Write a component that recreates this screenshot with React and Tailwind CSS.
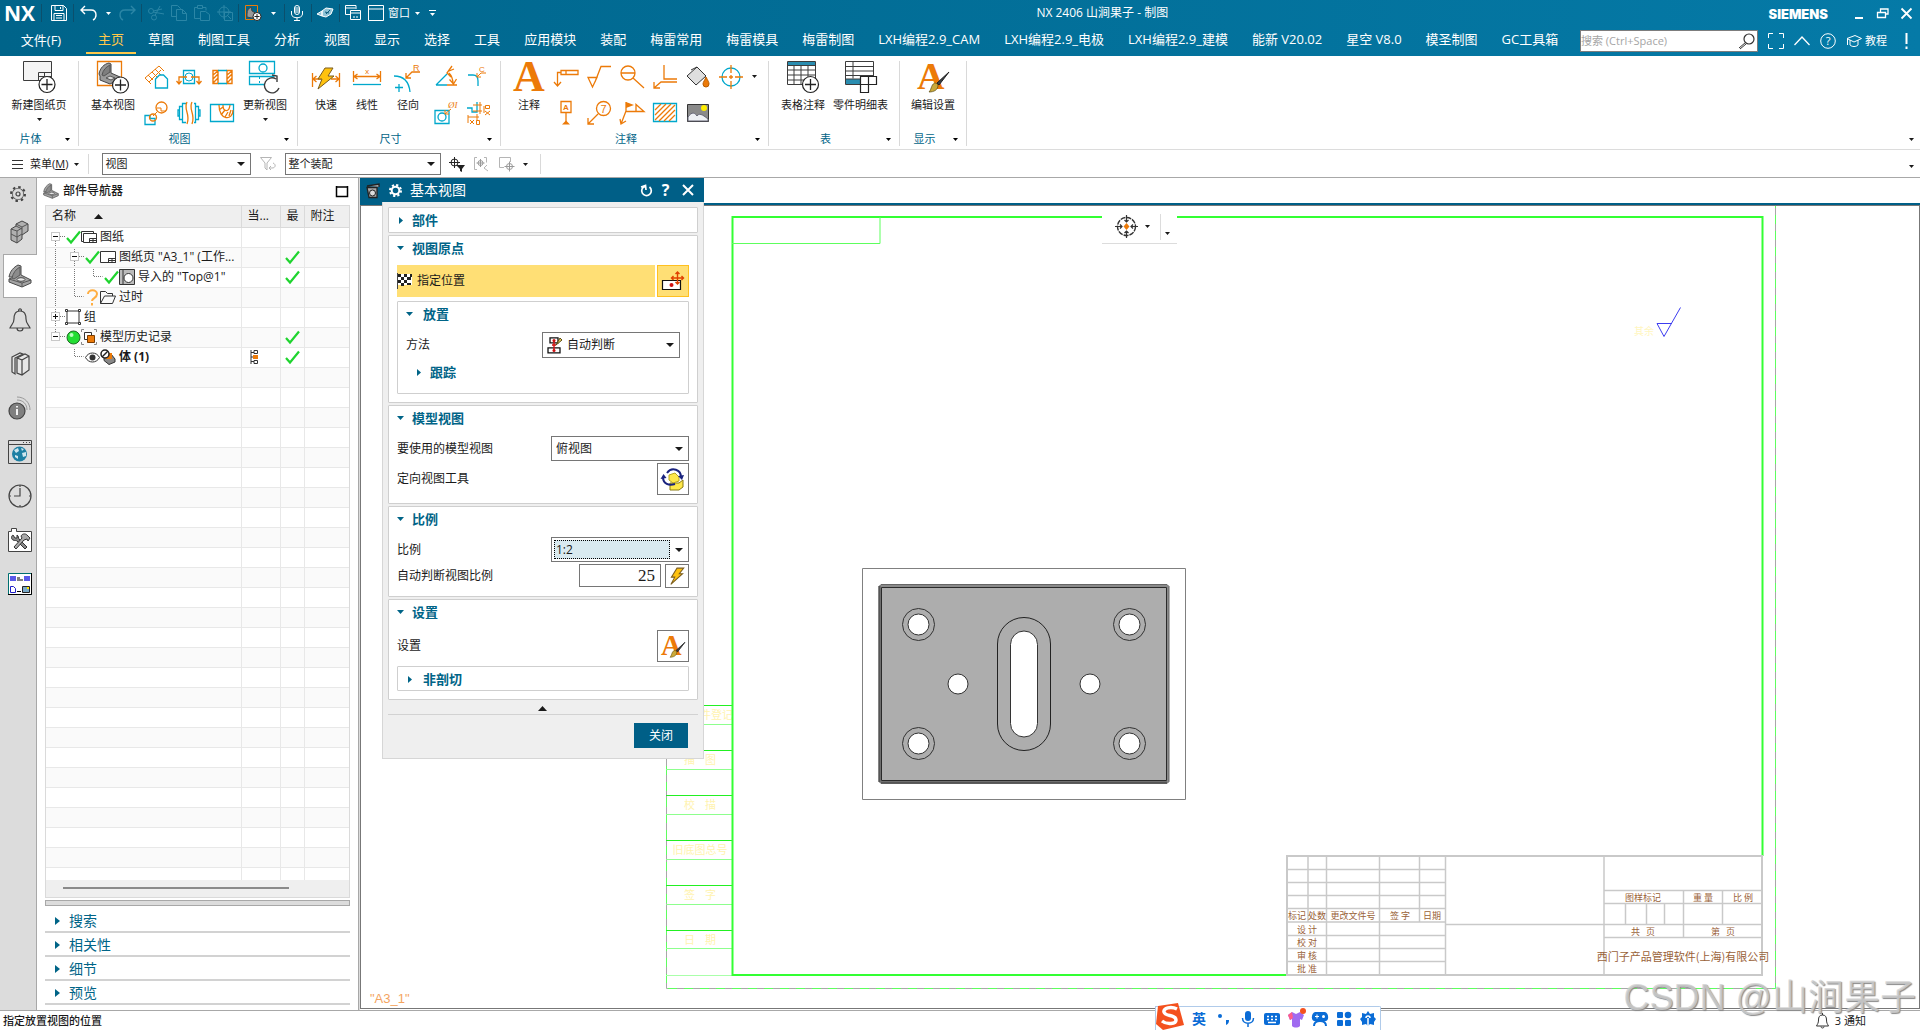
import { useState } from "react";

const ORANGE = "#ec7a08";
const CYAN = "#00a8cc";
const DARK = "#3c3c3c";

/* ---------- small helpers ---------- */

function Svg({ w = 24, h = w, box, className = "", children, ...rest }) {
  return (
    <svg
      width={w}
      height={h}
      viewBox={box || `0 0 ${w} ${h}`}
      fill="none"
      className={`shrink-0 overflow-visible ${className}`}
      aria-hidden="true"
      {...rest}
    >
      {children}
    </svg>
  );
}

const Caret = ({ className = "" }) => (
  <Svg w={5} h={3} className={className}>
    <path d="M0 0h5L2.500 3z" fill="currentColor" />
  </Svg>
);

const BigCaret = ({ className = "" }) => (
  <Svg w={8} h={4} className={className}>
    <path d="M0 0h8L4 4z" fill="#1a1a1a" />
  </Svg>
);

const Sep = () => <span className="h-[18px] w-px bg-[#0b4f6c]" />;

const Check = () => (
  <Svg w={15} h={14}>
    <path d="M1 8l4 4.500L14 1.500" stroke="#1fd42f" strokeWidth="2.200" />
  </Svg>
);

const Bracket = ({ w = 24 }) => (
  <Svg w={w} box="0 0 24 24">
    <path d="M1 13C2 7 6 3 10 1l3 1v9l10 5v3l-9 4-13-5v-3l5-2z" fill="#a4a4a4" stroke="#4a4a4a" />
    <path d="M4 14C5 9 8 5 12 3v8l-6 4z" fill="#8c8c8c" stroke="#5a5a5a" />
    <path d="M1 15l13 4 9-3M14 19v4" stroke="#5a5a5a" />
    <ellipse cx="13" cy="15.500" rx="4" ry="1.800" fill="#e8e8e8" stroke="#4a4a4a" />
  </Svg>
);

const Bolt = ({ w = 16 }) => (
  <Svg w={w} box="0 0 16 16">
    <path d="M8 1h6l-4 5h3L2.500 15.500 6 9H3z" fill="#ffc20e" stroke="#7a5c1e" strokeWidth="0.900" />
  </Svg>
);

const BrushA = ({ w = 32 }) => (
  <Svg w={w} box="0 0 32 32">
    <text x="0" y="28" fontSize="38" fontWeight="bold" fontFamily="Liberation Serif, serif" fill={ORANGE}>A</text>
    <path d="M32 11L20 22l2 2z" fill="#3a4044" stroke="#222" />
    <path d="M19 22c-5 0-4 6-7 9 5 0 9-2 9-7z" fill="#c9a93a" stroke="#5a4a14" strokeWidth="0.700" />
  </Svg>
);

/* ---------- title bar ---------- */

function TitleBar() {
  const dim = "#2b86a6";
  return (
    <div className="flex h-[26px] items-center text-white">
      <span className="ml-1 w-[37px] font-[Open_Sans,sans-serif] text-[21px] leading-[26px] font-bold">NX</span>
      <Sep />
      <button aria-label="保存" className="ml-[9px] mr-[6px]">
        <Svg w={16}>
          <path d="M.5.5h12l3 3v12H.5zM4 .5v5h8v-5M3 15.500v-7h10v7M5 10.500h6M5 13h6M9.500 2v2" stroke="#fff" />
        </Svg>
      </button>
      <Sep />
      <button aria-label="撤消" className="ml-[6px] mr-[9px]">
        <Svg w={17} h={16}>
          <path d="M5 1L1 5l4 4M1 5h10c3 0 5 2 5 5 0 2-1 4-3 5" stroke="#fff" strokeWidth="1.400" />
        </Svg>
      </button>
      <Caret />
      <button aria-label="重做" className="ml-2 mr-[5px]">
        <Svg w={17} h={16}>
          <path d="M12 1l4 4-4 4M16 5H6c-3 0-5 2-5 5 0 2 1 4 3 5" stroke={dim} strokeWidth="1.400" />
        </Svg>
      </button>
      <Sep />
      <div className="ml-[6px] mr-[5px] flex gap-[7px]">
        <Svg w={16}>
          <circle cx="3" cy="6" r="2.500" stroke={dim} />
          <circle cx="6" cy="12.500" r="2.500" stroke={dim} />
          <path d="M5 7l11 2M7 10.500L12 1M5.500 6L14 4" stroke={dim} />
        </Svg>
        <Svg w={16}>
          <path d="M5.500 11.500h-5V.5h6l3 3v1M5.500 4.500h6l4 4v7h-10zM11.500 4.500v4h4" stroke={dim} />
        </Svg>
        <Svg w={16}>
          <path d="M6 13.500H.5v-11h3M9 2.500h3v3M3.500 .5h5v3h-5zM6.500 6.500h5l4 3v6h-9z" stroke={dim} />
        </Svg>
        <Svg w={16}>
          <circle cx="7" cy="7" r="5" stroke={dim} />
          <path d="M7 0v14M0 7h14M7.500 7.500h8v8h-8zM10 10l4 4" stroke={dim} />
        </Svg>
      </div>
      <Sep />
      <button aria-label="基本视图" className="ml-[6px] mr-[9px] w-[17px]">
        <Svg w={17} h={16}>
          <path d="M.5.5h12v14H.5z" stroke={ORANGE} />
          <path d="M2 9c0-4 2-6 4-7l1 4 5 3-1 3-4 1-5-1z" fill="#999" stroke="#444" />
          <circle cx="12" cy="11.500" r="4" fill="#fff" stroke="#222" />
          <path d="M12 9v5M9.500 11.500h5" stroke="#222" />
        </Svg>
      </button>
      <Caret className="mr-[8px]" />
      <Sep />
      <Svg w={12} h={16} className="ml-[6px] mr-[8px]">
        <rect x="3.500" y=".5" width="5" height="9" rx="2.500" stroke="#fff" />
        <path d="M.5 6v3c0 5 11 5 11 0V6M6 12.500V16M3 15.500h6M4 3h4M4 5h4M4 7h4" stroke="#fff" />
      </Svg>
      <Sep />
      <Svg w={17} h={16} className="ml-[5px] mr-[5px]">
        <path d="M0 9l5-3v5zM5 6l4-3 7 1-2 5-5 3-4-1z" fill="#8fc3d6" stroke="#fff" />
        <path d="M8 7l4 1M9 9l4-4" stroke="#0b5c7e" />
      </Svg>
      <Sep />
      <Svg w={17} h={16} className="ml-[5px]">
        <path d="M11 4V.5H.5v9H5M.5 3h10M5.500 5.500h10v9h-10zM5.500 8h10" stroke="#fff" />
        <path d="M8 12h5" stroke="#fff" strokeDasharray="2 1" />
      </Svg>
      <Svg w={16} className="ml-[6px]">
        <path d="M.5.5h15v15H.5zM.5 4h15" stroke="#fff" />
      </Svg>
      <span className="ml-1 text-[11px]">窗口</span>
      <Caret className="ml-[5px]" />
      <Svg w={7} h={6} className="ml-[9px]">
        <path d="M0 .5h7" stroke="#fff" />
        <path d="M1 3h5L3.500 6z" fill="#fff" />
      </Svg>
      <h1 className="flex-1 text-center text-[12px]">NX 2406 山涧果子 - 制图</h1>
      <span className="mt-1 font-[Inter,sans-serif] text-[13px] font-black">SIEMENS</span>
      <button aria-label="最小化" className="ml-[27px]">
        <Svg w={8} h={12}><path d="M0 11h8" stroke="#fff" strokeWidth="2" /></Svg>
      </button>
      <button aria-label="还原" className="ml-[14px]">
        <Svg w={12} h={11}><path d="M3.500 4V1H11v5H9M.5 4.500h8v5h-8z" stroke="#fff" strokeWidth="1.300" /></Svg>
      </button>
      <button aria-label="关闭窗口" className="ml-3 mr-2">
        <Svg w={11}><path d="M.5.5l10 10M10.500.5l-10 10" stroke="#fff" strokeWidth="1.800" /></Svg>
      </button>
    </div>
  );
}

const TABS = [
  "主页", "草图", "制图工具", "分析", "视图", "显示", "选择", "工具", "应用模块", "装配",
  "梅雷常用", "梅雷模具", "梅雷制图", "LXH编程2.9_CAM", "LXH编程2.9_电极", "LXH编程2.9_建模",
  "能新 V20.02", "星空 V8.0", "模圣制图", "GC工具箱",
];

function TabBar() {
  const [active, setActive] = useState("主页");
  return (
    <div className="flex h-[30px] items-center text-white">
      <button className="w-[86px] shrink-0 pr-1 text-center text-[13px]">文件(F)</button>
      <nav className="flex self-stretch">
        {TABS.map((tab) => (
          <button
            key={tab}
            onClick={() => setActive(tab)}
            className={`h-[28px] border-b-2 px-3 pt-px text-[13px] leading-[25px] whitespace-nowrap ${
              active === tab ? "border-[#ffc84a] text-[#ffc84a]" : "border-transparent"
            }`}
          >
            {tab}
          </button>
        ))}
      </nav>
      <label className="ml-auto flex h-[22px] w-[178px] shrink-0 items-center border border-[#7d7d7d] bg-white">
        <input
          aria-label="搜索"
          placeholder="搜索 (Ctrl+Space)"
          className="min-w-0 flex-1 text-[11px] text-black outline-none placeholder:text-[#a5a5a5]"
        />
        <Svg w={17} className="mr-[2px]">
          <circle cx="11" cy="6" r="5" stroke="#333" strokeWidth="1.200" />
          <path d="M7.500 9.500L1 15M8 11l-6 5" stroke="#333" />
        </Svg>
      </label>
      <div className="ml-[10px] mr-3 flex shrink-0 items-center">
        <Svg w={16}><path d="M5 .5H.5V5M11 .5h4.500V5M5 15.500H.5V11M11 15.500h4.500V11" stroke="#fff" /></Svg>
        <Svg w={16} h={10} className="ml-[10px]"><path d="M.5 9L8 1l7.500 8" stroke="#fff" strokeWidth="1.300" /></Svg>
        <Svg w={16} className="ml-[10px]">
          <circle cx="8" cy="8" r="7.300" stroke="#fff" />
          <text x="8" y="12" fontSize="11" textAnchor="middle" fill="#fff" fontFamily="Open Sans, sans-serif">?</text>
        </Svg>
        <Svg w={16} h={12} className="ml-[10px]">
          <path d="M1 3.500L9 .5l6.500 3L8 7zM4 5v5c2 2 6 2 8 0V5M1.500 4v6" stroke="#fff" />
        </Svg>
        <span className="ml-[3px] text-[11px]">教程</span>
        <Svg w={3} h={16} className="ml-[18px]"><path d="M1.500 0v11M1.500 13.500V16" stroke="#fff" strokeWidth="2" /></Svg>
      </div>
    </div>
  );
}

/* ---------- ribbon ---------- */

const S = (children) => <Svg w={24}>{children}</Svg>;

const viewIcons = [
  S(<g>
    <path d="M1 13L15 1l5 5M1 13l6 6M5 17l12-12M8 7l6 6M11 4l6 6M4 10l5 5" stroke={ORANGE} />
    <path d="M11.500 14l4-4h4l4 4v9h-12z" stroke={CYAN} fill="#fff" strokeWidth="1.300" />
  </g>),
  S(<g>
    <path d="M6.500 5.500h11v13h-11z" stroke={CYAN} strokeWidth="1.300" />
    <circle cx="12" cy="12" r="4" stroke={CYAN} />
    <path d="M10 12H2v7M-.5 16l2.500 3 2.500-3M14 12h8v7M19.500 16l2.500 3 2.500-3" stroke={ORANGE} strokeWidth="1.300" />
  </g>),
  S(<g>
    <path d="M3 5.500h5v13H3zM17 5.500h5v13h-5zM3 10l5-4M3 14l5-5M3 18l5-5M17 10l5-4M17 14l5-5M17 18l5-5" stroke={ORANGE} strokeWidth="1.400" />
    <path d="M8 5.500h9M8 18.500h9" stroke={CYAN} strokeWidth="1.400" />
  </g>),
  S(<g>
    <circle cx="17.500" cy="6.500" r="5.500" stroke={ORANGE} strokeWidth="1.300" />
    <path d="M13 7h4v3h5M9 15l4-4" stroke={ORANGE} />
    <path d="M1 14.500h5v3h5v6H1z" stroke={CYAN} strokeWidth="1.300" />
    <circle cx="9" cy="16.500" r="3.500" stroke={ORANGE} strokeWidth="1.300" />
  </g>),
  S(<g>
    <path d="M9 2.500H5.500v19H9M5 5.500H2.500v13H5M2 9H1v6h1M17 2.500h1.500v19H17M19 5.500h2.500v13H19M22 9h1v6h-1" stroke={CYAN} strokeWidth="1.300" />
    <path d="M10 1c-4 8 4 12 0 22M15 1c-4 8 4 12 0 22" stroke={ORANGE} strokeWidth="1.300" />
  </g>),
  S(<g>
    <path d="M.5 3.500h23v17H.5z" stroke={CYAN} strokeWidth="1.300" />
    <path d="M9 4c0 16 14 16 14 5M13 4c0 7 6 8 7 0M9 9l4-3M11 14l4-5M15 16l3-5M19 15l2-6" stroke={ORANGE} strokeWidth="1.300" />
  </g>),
];

const dimIcons = [
  S(<g>
    <path d="M2 20L13 9M2 20h11" stroke={CYAN} strokeWidth="1.300" />
    <path d="M18 1L13 8l4 4M15 8c3 3 4 8 4 11M15.500 14.500l4 4.500 3-5M13 20h10M15 6l5-2" stroke={ORANGE} strokeWidth="1.300" />
  </g>),
  S(<g>
    <path d="M1 10h5c4 0 5 3 5 6v5" stroke={CYAN} strokeWidth="1.300" />
    <path d="M10 12l4-4h5M10 8v4h4" stroke={ORANGE} />
    <text x="12" y="7" fontSize="8" fill={ORANGE} fontFamily="Liberation Sans, sans-serif">C</text>
  </g>),
  S(<g>
    <path d="M1 9.500h14v13H1z" stroke={CYAN} strokeWidth="1.300" />
    <circle cx="8" cy="16" r="4" stroke={CYAN} strokeWidth="1.300" />
    <path d="M11 13l6-5M11 9v4h4" stroke={ORANGE} />
    <text x="14" y="7" fontSize="9" fontStyle="italic" fill={ORANGE} fontFamily="Liberation Serif, serif">ØI</text>
  </g>),
  S(<g>
    <path d="M0 7h5v4h5V1" stroke={CYAN} strokeWidth="1.300" />
    <path d="M6 10h9M6 4h9M13 1v12M17 5v7M1 14v8M1 16h11M10 13v7" stroke={ORANGE} />
    <path d="M18.500 4.500h4v3h-4zM9.500 19.500h3v4h-3zM18 10l5 4M23 10l-5 4M3 19l4 4M7 19l-4 4" stroke={ORANGE} />
  </g>),
];

const noteIcons = [
  S(<path d="M7 5.500h17v4H7zM12 5.500v4M7 7.500H3.500V21M0 17l3.500 4L7 17" stroke={ORANGE} strokeWidth="1.300" />),
  S(<path d="M1 12.500h9L5.500 22zM8 17l6-15.500h10" stroke={ORANGE} strokeWidth="1.300" />),
  S(<g>
    <circle cx="8" cy="8" r="7" stroke={ORANGE} strokeWidth="1.300" />
    <path d="M1 8h14M13 13l11 10" stroke={ORANGE} strokeWidth="1.300" />
  </g>),
  S(<path d="M11 0v14h13M24 17H8l-7 6M1 17v6h6" stroke={ORANGE} strokeWidth="1.300" />),
  S(<g>
    <path d="M11 2l9 9-10 9-9-9z" fill="#dedede" stroke="#333" />
    <path d="M5 5L11 2" stroke="#333" />
    <path d="M20 12c2 4 3 5 3 7a3 3 0 01-6 0c0-2 2-4 3-7z" fill={ORANGE} stroke="#b85c00" />
  </g>),
  S(<g>
    <circle cx="12" cy="12" r="9" stroke={CYAN} strokeWidth="1.300" />
    <path d="M12 0v8M12 10v4M12 16v8M0 12h8M10 12h4M16 12h8" stroke={ORANGE} strokeWidth="1.300" />
  </g>),
  S(<g>
    <path d="M7 .5h10v11H7zM12 11.500V21" stroke={ORANGE} strokeWidth="1.300" />
    <path d="M8 23.500l4-4 4 4z" fill={ORANGE} />
    <text x="12" y="9" fontSize="8" textAnchor="middle" fontWeight="bold" fill={ORANGE} fontFamily="Liberation Sans, sans-serif">A</text>
  </g>),
  S(<g>
    <circle cx="16.500" cy="7.500" r="7" stroke={ORANGE} strokeWidth="1.300" />
    <path d="M11 13L1 23M1 17v6h6" stroke={ORANGE} strokeWidth="1.300" />
    <text x="16.500" y="11.500" fontSize="11" textAnchor="middle" fill={ORANGE} fontFamily="Liberation Sans, sans-serif">7</text>
  </g>),
  S(<g>
    <path d="M6 1v9M6 10L1 23M0 18l1 5 5-3M6 10.500h18l-8-7v7" stroke={ORANGE} strokeWidth="1.300" />
    <path d="M6 1l8 3-8 3z" fill={ORANGE} />
  </g>),
  S(<g>
    <path d="M.5 2.500h23v18H.5z" stroke={CYAN} strokeWidth="1.300" />
    <path d="M2 9l6-6M2 14L13 3M2 19L18 3M6 20L22 4M11 20L22 9M16 20l6-6" stroke={ORANGE} strokeWidth="1.300" />
  </g>),
  S(<g>
    <path d="M1.500 3.500h21v17h-21z" fill="#8a8a8a" stroke="#333" />
    <path d="M2 16c4-6 7-4 9-1 2-3 5-2 11 3v2H2z" fill="#eef0f4" stroke="#667" />
    <circle cx="18" cy="7" r="3" fill="#ffee00" />
  </g>),
];

const Ribbon32 = {
  sheet: (
    <Svg w={34} h={32} box="-1 0 34 32">
      <path d="M.5.500h28v19H.5z" fill="#f4f4f4" stroke={DARK} />
      <path d="M15.500 11.500h13v8h-13zM15.500 15.500h13M21.500 11.500v8" stroke={DARK} />
      <circle cx="24" cy="23.500" r="8" fill="#fff" stroke="#222" strokeWidth="1.200" />
      <path d="M24 18v11M18.500 23.500h11" stroke="#222" strokeWidth="1.300" />
    </Svg>
  ),
  base: (
    <Svg w={32}>
      <path d="M.5.500h24v24h-24z" stroke={ORANGE} strokeWidth="1.300" />
      <path d="M2 13C3 7 7 3 12 2l2 1v9l9 4v2l-10 5-10-4v-4z" fill="#9a9a9a" stroke="#444" />
      <path d="M5 14c1-5 4-8 8-10v7l-6 4z" fill="#7e7e7e" stroke="#555" />
      <path d="M9 17l4-2 5 2-4 2z" fill="#ddd" stroke="#555" />
      <circle cx="23.500" cy="24" r="8" fill="#fff" stroke="#222" strokeWidth="1.200" />
      <path d="M23.500 18.500v11M18 24h11" stroke="#222" strokeWidth="1.300" />
    </Svg>
  ),
  update: (
    <Svg w={32}>
      <path d="M.5.500h25v12H.5zM16 23.500H.5v-8h25" stroke={CYAN} strokeWidth="1.300" />
      <path d="M10.500 16v8" stroke={CYAN} strokeDasharray="2 2" />
      <circle cx="14" cy="7" r="4" stroke={CYAN} strokeWidth="1.300" />
      <path d="M27 18a7.500 7.500 0 10 3 9M23 14l5 1v6" stroke={DARK} strokeWidth="1.400" />
    </Svg>
  ),
  rapid: (
    <Svg w={32}>
      <path d="M2.500 12v14M29.500 12v14M3 18h8M6.500 15L3 18l3.500 3M21 18h8M25.500 15l3.500 3-3.500 3" stroke={ORANGE} strokeWidth="1.300" />
      <path d="M15 7h8l-5 8h6L8 28l4-10H8z" fill="#ffc20e" stroke="#7a5c1e" />
    </Svg>
  ),
  linear: (
    <Svg w={32}>
      <path d="M2.500 10v11M29.500 10v11M3 15.500h26M6.500 13L3 15.500 6.500 18M25.500 13l3.500 2.500-3.500 2.500" stroke={ORANGE} strokeWidth="1.300" />
      <path d="M2 23.500h28" stroke={CYAN} strokeWidth="1.300" />
      <text x="16" y="13" fontSize="8" textAnchor="middle" fill={ORANGE} fontFamily="Open Sans, sans-serif">x</text>
    </Svg>
  ),
  radial: (
    <Svg w={32}>
      <path d="M2 15c10 0 15 6 16 16M3 26.500h8M7 23v8" stroke={CYAN} strokeWidth="1.300" />
      <path d="M14 17l6-6h8M14 12v5h5" stroke={ORANGE} strokeWidth="1.300" />
      <text x="21" y="10" fontSize="9" fill={ORANGE} fontFamily="Liberation Sans, sans-serif">R</text>
    </Svg>
  ),
  note: (
    <Svg w={32}>
      <text x="0" y="30" fontSize="44" fontWeight="bold" fontFamily="Liberation Serif, serif" fill={ORANGE}>A</text>
    </Svg>
  ),
  table: (
    <Svg w={32}>
      <path d="M.5.500h28v23H.5z" fill="#fff" stroke={DARK} />
      <path d="M1 1h27v3H1z" fill="#2a8db0" />
      <path d="M.5 4.500h28M.5 9h28M.5 14h28M.5 19h28M7 4.500v19M14 4.500v19M21 4.500v19" stroke={DARK} />
      <circle cx="23.500" cy="23.500" r="8" fill="#fff" stroke="#222" strokeWidth="1.200" />
      <path d="M23.500 18v11M18 23.500h11" stroke="#222" strokeWidth="1.300" />
    </Svg>
  ),
  parts: (
    <Svg w={32}>
      <path d="M.5.500h28v23H.5z" fill="#fff" stroke={DARK} />
      <path d="M1 18h15v5H1z" fill="#2a8db0" />
      <path d="M.5 5.500h28M.5 10h28M.5 14.500h28M.5 18h28M8 .5v17" stroke={DARK} />
      <path d="M15.500 15.500h16v8h-8v8h-8zM23.500 15.500v8h-8" fill="#fff" stroke="#222" strokeWidth="1.200" />
    </Svg>
  ),
  style: <BrushA />,
};

function BigTool({ icon, label, more, className = "" }) {
  return (
    <button className={`flex shrink-0 flex-col items-center ${className}`}>
      <span className="flex h-8 items-center">{icon}</span>
      <span className="mt-1 text-[11px] leading-4 whitespace-nowrap">{label}</span>
      {more && <Caret className="mt-[5px]" />}
    </button>
  );
}

function SmallTools({ icons, cols }) {
  return (
    <div className={`mt-1 grid content-start gap-x-[9px] gap-y-3 ${cols}`}>
      {icons.map((icon, i) => (
        <button key={i} aria-label={`工具 ${i + 1}`} className="h-6 w-6">{icon}</button>
      ))}
    </div>
  );
}

function Group({ label, width, children }) {
  return (
    <section className={`flex h-[85px] shrink-0 flex-col border-r border-[#d9d9d9] ${width}`}>
      <div className="flex h-[71px]">{children}</div>
      <div className="flex h-[14px] items-center text-[11px] leading-[14px] text-[#006487]">
        <span className="flex-1 pr-1 text-center">{label}</span>
        <Caret className="mr-2 text-black" />
      </div>
    </section>
  );
}

function Ribbon() {
  return (
    <div className="flex h-[94px] border-b border-[#dcdcdc] bg-white pt-[5px]">
      <Group label="片体" width="w-[79px]">
        <BigTool icon={Ribbon32.sheet} label="新建图纸页" more className="mx-auto" />
      </Group>
      <Group label="视图" width="w-[219px]">
        <BigTool icon={Ribbon32.base} label="基本视图" className="ml-3 mr-[9px]" />
        <SmallTools icons={viewIcons} cols="grid-cols-3" />
        <BigTool icon={Ribbon32.update} label="更新视图" more className="ml-[9px]" />
      </Group>
      <Group label="尺寸" width="w-[203px]">
        <div className="ml-[12px] mr-[10px] flex gap-[9px]">
          <BigTool icon={Ribbon32.rapid} label="快速" />
          <BigTool icon={Ribbon32.linear} label="线性" />
          <BigTool icon={Ribbon32.radial} label="径向" />
        </div>
        <SmallTools icons={dimIcons} cols="grid-cols-2" />
      </Group>
      <Group label="注释" width="w-[268px]">
        <BigTool icon={Ribbon32.note} label="注释" className="ml-3 mr-[9px]" />
        <SmallTools icons={noteIcons} cols="grid-cols-6" />
        <Caret className="mt-[14px] ml-[9px]" />
      </Group>
      <Group label="表" width="w-[131px]">
        <BigTool icon={Ribbon32.table} label="表格注释" className="ml-3 mr-2" />
        <BigTool icon={Ribbon32.parts} label="零件明细表" />
      </Group>
      <Group label="显示" width="w-[67px]">
        <BigTool icon={Ribbon32.style} label="编辑设置" className="mx-auto" />
      </Group>
      <Caret className="mr-[6px] mb-2 ml-auto self-end" />
    </div>
  );
}

function Select({ label, options, className = "", inner = "" }) {
  return (
    <span className={`relative inline-flex shrink-0 items-center border border-[#767676] bg-white ${className}`}>
      <select aria-label={label} className={`h-full w-full appearance-none outline-none ${inner}`}>
        {options.map((o) => <option key={o}>{o}</option>)}
      </select>
      <BigCaret className="pointer-events-none absolute right-[5px]" />
    </span>
  );
}

function SelectionBar() {
  return (
    <div className="flex h-[28px] items-center border-b border-[#a8a8a8] bg-white pt-px text-[11px]">
      <Svg w={11} h={9} className="ml-3"><path d="M0 .5h11M0 4.500h11M0 8.500h11" stroke="#333" /></Svg>
      <button className="ml-[7px] flex items-center gap-[6px]">
        <span>菜单(<u>M</u>)</span>
        <Caret />
      </button>
      <span className="ml-[9px] mr-[13px] h-[20px] w-px bg-[#d9d9d9]" />
      <Select label="类型过滤器" options={["视图"]} className="h-[22px] w-[149px]" inner="pl-[2px]" />
      <Svg w={16} h={15} className="mx-[9px]">
        <path d="M.5.500h11L7 6v7l-2-2V6zM9 11h3c4 0 4-4 1-5M11 9l-2 2 2 2" stroke="#b5b5b5" />
      </Svg>
      <Select label="选择范围" options={["整个装配"]} className="h-[22px] w-[156px]" inner="pl-[2px]" />
      <Svg w={16} h={15} className="ml-2">
        <circle cx="5.500" cy="5.500" r="3.500" stroke="#222" />
        <path d="M5.500 0v11M0 5.500h11" stroke="#222" />
        <path d="M7 8h9l-3 4v3l-2-1v-2z" fill="#222" />
      </Svg>
      <Svg w={16} h={15} className="ml-[9px]">
        <path d="M3 .5H.5v12H3M10 .5h2.500v5M13 8l-3 3 4 3" stroke="#b5b5b5" />
        <path d="M6.500 2v8M2.500 6h8" stroke="#999" />
        <circle cx="6.500" cy="6" r="2.500" stroke="#999" />
      </Svg>
      <Svg w={16} h={15} className="ml-[9px]">
        <path d="M5 10.500H.5V.5h11V5" stroke="#b5b5b5" />
        <circle cx="10.500" cy="9.500" r="3" stroke="#999" />
        <path d="M10.500 4.500v10M5.500 9.500h10" stroke="#999" />
      </Svg>
      <Caret className="ml-2" />
      <span className="ml-3 h-[20px] w-px bg-[#d9d9d9]" />
      <Caret className="mt-1 mr-[6px] ml-auto" />
    </div>
  );
}

/* ---------- resource bar ---------- */

const railIcons = [
  ["装配导航器", <Svg w={24}>
    <path d="M3 9l5-3V4l6-3 6 3v7l-6 4v4l-5 4-6-3z" fill="#b0b0b0" stroke="#444" />
    <path d="M3 9l6 2 5-3M9 11v12M3 14l6 3 5-3M8 4l6 3 6-3M14 7v8M8 6l6 3" stroke="#555" />
  </Svg>],
  ["部件导航器", <Bracket />],
  ["通知", <Svg w={24}>
    <path d="M12 3c-5 0-6 4-6 8 0 5-3 6-4 9h20c-1-3-4-4-4-9 0-4-1-8-6-8zM9 20c0 4 6 4 6 0M10.500 3c0-3 3-3 3 0" stroke="#444" strokeWidth="1.200" />
  </Svg>],
  ["重用库", <Svg w={24}>
    <path d="M4 5l8-4 3 1-8 4v16l-3-2z" fill="#e6e6e6" stroke="#444" strokeWidth="1.200" />
    <path d="M9 6l8-4 4 2v14l-7 5-5-2zM9 6l5 2v15M14 8l7-4" fill="#e6e6e6" stroke="#444" strokeWidth="1.200" />
  </Svg>],
  ["HD3D 工具", <Svg w={24}>
    <path d="M9 1c8 0 13 6 13 13M9 4c6 0 10 4 10 10" stroke="#999" />
    <circle cx="9" cy="15" r="8" fill="#808080" stroke="#444" strokeWidth="1.200" />
    <path d="M9 13v6M9 10v1.500" stroke="#fff" strokeWidth="1.800" />
  </Svg>],
  ["浏览器", <Svg w={24}>
    <path d="M.5.500h23v23H.5zM.5 4.500h23" stroke="#444" />
    <path d="M15 2.500h7" stroke="#444" strokeDasharray="1 2" />
    <circle cx="11.500" cy="14" r="7.500" fill="#1d7fa3" />
    <path d="M6 10l4-2 1 3-3 2zM7 15l3 1v3l-3-2zM13 8l3 1-2 2zM14 13l4-1v4l-3 1z" fill="#cfe6ee" />
  </Svg>],
  ["历史记录", <Svg w={24}>
    <circle cx="12" cy="12" r="11" stroke="#444" strokeWidth="1.200" />
    <path d="M12 4v8H6M12 1v2M12 21v2M1 12h2M21 12h2" stroke="#444" strokeWidth="1.200" />
  </Svg>],
  ["加工向导", <Svg w={24}>
    <path d="M.5 3.500h3v-3h5v3h15v20H.5z" fill="#fff" stroke="#444" />
    <path d="M5 7c-2 1-2 4 0 5 2 1 3 0 4 1l8 8 2-2-8-8c-1-1 0-3-2-4v3H7z" fill="#888" stroke="#333" />
    <path d="M19 7c-2-2-5-1-6 1l1 2-8 9 2 2 8-9 3-1 1 2 2-3z" fill="#aaa" stroke="#333" />
  </Svg>],
  ["角色", <Svg w={24} h={22}>
    <path d="M.5.500h23v21H.5z" fill="#fff" stroke="#007070" />
    <path d="M23.500 0v21.500H0" stroke="#000" />
    <path d="M2 3h6v5H2zM16 3h6v5h-6z" fill="#5a5ae8" />
    <path d="M9 5h3M9 7h6M9 18.500h4" stroke="#000" />
    <path d="M2.500 13.500h3l2 2v4h-5z" stroke="#2020c8" />
    <path d="M14.500 13.500h7v6h-7z" fill="#79a9c8" stroke="#222" />
    <path d="M19 14h2v2h-2z" fill="#ffe600" />
  </Svg>],
];

function ResourceBar() {
  return (
    <aside className="flex w-[37px] shrink-0 flex-col border-r border-[#a8a8a8] bg-[#dcdcdc]">
      <button aria-label="设置" className="flex h-[32px] items-center justify-center">
        <Svg w={16}>
          <circle cx="8" cy="8" r="5.500" stroke="#444" strokeWidth="1.200" />
          <circle cx="8" cy="8" r="2" stroke="#444" strokeWidth="1.200" />
          <circle cx="8" cy="8" r="7" stroke="#444" strokeWidth="2" strokeDasharray="2.500 3" />
          <circle cx="8" cy="8" r="4.900" stroke="#dcdcdc" strokeWidth="1" />
        </Svg>
      </button>
      {railIcons.map(([name, icon], i) => (
        <button
          key={name}
          aria-label={name}
          className={`flex h-[44px] shrink-0 items-center ${
            i === 1 ? "-mr-px ml-[3px] border border-r-0 border-[#a8a8a8] bg-white pl-1" : "pl-2"
          }`}
        >
          {icon}
        </button>
      ))}
    </aside>
  );
}

/* ---------- part navigator ---------- */

const SheetIcon = ({ double }) => (
  <Svg w={16} h={13}>
    {double && <path d="M2 10.500H.5V.5h12V2" stroke="#333" />}
    <path d={double ? "M2.500 2.500h13v9h-13z" : "M.5.500h15v11H.5z"} fill="#fff" stroke="#333" />
    <path d="M8.500 7.500h7v4h-7zM8.500 9.500h7M12 7.500v4" stroke="#333" />
  </Svg>
);

// tree lines and expander boxes, one drawing for each row
function Guide({ w, box, sign, lines }) {
  return (
    <Svg w={w} h={20}>
      <path d={lines} stroke="#777" strokeDasharray="1 1" />
      {box !== undefined && (
        <g>
          <rect x={box} y="5.500" width="8" height="8" fill="#fff" stroke="#c8c8c8" />
          <path d={`M${box + 1.5} 9.500h5${sign === "+" ? `M${box + 4} 7v5` : ""}`} stroke="#111" />
        </g>
      )}
    </Svg>
  );
}

const TREE = [
  {
    guide: <Guide w={20} box={5.5} lines="M9.500 14v6M14 9.500h5" />,
    icons: [<Check />, <SheetIcon double />],
    text: "图纸",
  },
  {
    guide: <Guide w={39} box={24.5} lines="M9.500 0v20M28.500 0v5M28.500 14v6M33 9.500h5" />,
    icons: [<Check />, <SheetIcon />],
    text: '图纸页 "A3_1" (工作...',
    latest: true,
  },
  {
    guide: <Guide w={58} lines="M9.500 0v20M28.500 0v20M47.500 0v9.500h9" />,
    icons: [<Check />, <Svg w={16}>
      <path d="M.5.500h15v15H.5z" fill="#bbb" stroke="#333" />
      <path d="M4 1v14" stroke="#333" />
      <circle cx="9.500" cy="9" r="4.500" fill="#fff" stroke="#333" />
    </Svg>],
    text: '导入的 "Top@1"',
    latest: true,
  },
  {
    guide: <Guide w={39} lines="M9.500 0v20M28.500 0v9.500h9" />,
    icons: [<Svg w={15} h={17}>
      <path d="M3 5c0-5 9-5 9 0 0 4-5 4-5 7M7 14v2.500" stroke="#ffae42" strokeWidth="2" />
    </Svg>, <Svg w={16} h={13}>
      <path d="M.5 12.500V.5h5l2 2h5v2.500M.5 12.500l4-7.500h11l-3 7.500z" stroke="#333" />
    </Svg>],
    text: "过时",
  },
  {
    guide: <Guide w={19} box={5.5} sign="+" lines="M9.500 0v5M9.500 14v6M14 9.500h5" />,
    icons: [<Svg w={16}>
      <path d="M2 2h12v12H2z" fill="#fff" stroke="#333" />
      <path d="M.5.500h2v2h-2zM13.500.5h2v2h-2zM.5 13.500h2v2h-2zM13.500 13.500h2v2h-2z" fill="#fff" stroke="#333" />
    </Svg>],
    text: "组",
  },
  {
    guide: <Guide w={20} box={5.5} lines="M9.500 0v5M14 9.500h5" />,
    icons: [<Svg w={15}>
      <circle cx="7.500" cy="7.500" r="6.500" fill="#22dd33" stroke="#1c6b22" />
      <circle cx="5.500" cy="5" r="2" fill="#b8ffbe" />
    </Svg>, <Svg w={16}>
      <path d="M3 .5H.5V3M13 .5h2.500V3M3 15.500H.5V13M13 15.500h2.500V13" stroke="#888" />
      <path d="M3.500 3.500h7v7h-7z" fill="#fff" stroke="#333" />
      <path d="M6.500 6.500h7v7h-7z" fill={ORANGE} stroke="#7a3c00" />
    </Svg>],
    text: "模型历史记录",
    latest: true,
  },
  {
    guide: <Guide w={39} lines="M28.500 0v9.500h9" />,
    icons: [<Svg w={15} h={11}>
      <path d="M.5 5.500c3-6 11-6 14 0-3 6-11 6-14 0z" fill="#fff" stroke="#333" />
      <circle cx="7.500" cy="5.500" r="3" fill="#333" />
    </Svg>, <Svg w={16}>
      <path d="M4 8l7-3 4 5v3l-6 2.500-5-4z" fill="#888" stroke="#333" />
      <path d="M6 4h6v6H6z" fill={ORANGE} />
      <circle cx="5" cy="5" r="4" fill="#fff" stroke="#222" strokeWidth="1.500" />
      <path d="M2 8l6-6" stroke="#222" strokeWidth="1.500" />
    </Svg>],
    text: "体 (1)",
    bold: true,
    current: true,
    latest: true,
  },
];

const ROWS = [...TREE, ...Array(26).fill(null)];

function PartNavigator() {
  return (
    <aside className="flex w-[322px] shrink-0 flex-col border-r border-[#a8a8a8] bg-white pr-2 pb-[5px] pl-2">
      <div className="flex h-[27px] shrink-0 items-center pb-px">
        <span className="-ml-[2px]"><Bracket w={16} /></span>
        <h2 className="ml-1 text-[12px] font-medium">部件导航器</h2>
        <Svg w={12} h={11} className="mr-[2px] ml-auto"><path d="M.5 0v10.500h11V0M0 1h12" stroke="#000" strokeWidth="1.500" /></Svg>
      </div>
      <div className="flex min-h-0 flex-1 flex-col border border-[#dadada]">
        <div className="min-h-0 flex-1 overflow-hidden">
          <table className="w-full table-fixed border-collapse text-[12px]">
            <thead>
              <tr className="h-[21px] border-b border-[#dadada] bg-[#efefef] text-left">
                <th className="border-r border-[#dadada] p-0 pl-[6px] font-normal">
                  <span className="flex items-center gap-[18px]">
                    名称
                    <Svg w={9} h={5}><path d="M0 5h9L4.500 0z" fill="#1a1a1a" /></Svg>
                  </span>
                </th>
                <th className="w-[39px] border-r border-[#dadada] p-0 pl-[6px] font-normal">当...</th>
                <th className="w-[24px] border-r border-[#dadada] p-0 pl-[6px] font-normal">最</th>
                <th className="w-[45px] p-0 pl-[6px] font-normal">附注</th>
              </tr>
            </thead>
            <tbody>
              {ROWS.map((row, i) => (
                <tr key={i} className={`h-[20px] border-b border-[#e8e8e8] ${i % 2 ? "bg-[#fafafa]" : "bg-white"}`}>
                  <td className="border-r border-[#e8e8e8] p-0">
                    {row && (
                      <div className="flex h-[19px] items-center overflow-hidden whitespace-nowrap">
                        {row.guide}
                        {row.icons.map((icon, k) => <span key={k}>{icon}</span>)}
                        <span className={`pl-[3px] ${row.bold ? "font-bold" : ""}`}>{row.text}</span>
                      </div>
                    )}
                  </td>
                  <td className="border-r border-[#e8e8e8] p-0 pl-2">
                    {row?.current && (
                      <Svg w={8} h={14}>
                        <path d="M1 0v14M1 2.500h3M1 7h3M1 11.500h3M4 .5h3.500v3H4zM4 10.500h3.500v3H4z" stroke="#333" />
                        <path d="M3 5h5v4H3z" fill={ORANGE} />
                      </Svg>
                    )}
                  </td>
                  <td className="border-r border-[#e8e8e8] p-0 pl-1">{row?.latest && <Check />}</td>
                  <td className="p-0" />
                </tr>
              ))}
            </tbody>
          </table>
        </div>
        <div className="h-[17px] shrink-0 bg-[#efefef] pt-[7px] pl-[17px]">
          <div className="h-[2px] w-[226px] bg-[#8a8a8a]" />
        </div>
      </div>
      <div className="mt-[2px] mb-[3px] h-[6px] shrink-0 border border-[#a8a8a8] bg-[#dcdcdc]" />
      {["搜索", "相关性", "细节", "预览"].map((name) => (
        <button
          key={name}
          className="flex h-[24px] shrink-0 items-center gap-[9px] border-b-2 border-[#d2d2d2] pt-px pl-[10px] text-[14px] leading-[21px] text-[#006487]"
        >
          <Svg w={5} h={8}><path d="M0 0l5 4-5 4z" fill="#006487" /></Svg>
          {name}
        </button>
      ))}
    </aside>
  );
}

/* ---------- base view dialog ---------- */

function Heading({ open, className = "", children }) {
  return (
    <button className={`flex h-[24px] shrink-0 items-center text-[13px] leading-[22px] font-bold text-[#006487] ${className}`}>
      <span className="w-[15px]">
        {open
          ? <Svg w={7} h={4}><path d="M0 0h7L3.500 4z" fill="#006487" /></Svg>
          : <Svg w={4} h={7} className="ml-[2px]"><path d="M0 0l4 3.500L0 7z" fill="#006487" /></Svg>}
      </span>
      {children}
    </button>
  );
}

const panel = "flex flex-col rounded-[1px] border border-[#cfcfcf] bg-white";

function BaseViewDialog() {
  const [ratio, setRatio] = useState("25");
  return (
    <div className="absolute top-0 left-0 z-10 flex items-start text-[12px]" role="dialog" aria-label="基本视图">
      <div className="flex h-[27px] w-[22px] justify-end bg-[#005f87] pt-[5px] pr-[2px]">
        <Svg w={14} h={16}>
          <path d="M1 3l12-2v3M1 4.500h10v10H3z" fill="#aaa" stroke="#222" strokeWidth="1.300" />
          <circle cx="6.500" cy="10" r="3" fill="#ddd" stroke="#222" />
        </Svg>
      </div>
      <div className="w-[322px]">
        <div className="flex h-[24px] items-center bg-[#005f87] pr-[10px] pl-[7px] text-white">
          <Svg w={13}>
            <circle cx="6.500" cy="6.500" r="3.800" stroke="#fff" strokeWidth="2" />
            <circle cx="6.500" cy="6.500" r="5.500" stroke="#fff" strokeWidth="2" strokeDasharray="2.200 2.120" />
          </Svg>
          <span className="ml-2 flex-1 text-[14px] leading-6">基本视图</span>
          <Svg w={13} className="mr-2">
            <path d="M5 2.200A4.800 4.800 0 109.500 3M1 3l4.500-1.500L6 6" stroke="#fff" strokeWidth="1.700" />
          </Svg>
          <span className="mr-3 w-[9px] text-center text-[16px] font-bold">?</span>
          <button aria-label="关闭对话框">
            <Svg w={12}><path d="M1 1l10 10M11 1L1 11" stroke="#fff" strokeWidth="2" /></Svg>
          </button>
        </div>
        <div className="flex flex-col gap-[2px] border border-t-0 border-[#d6d6d6] bg-[#efefef] px-[5px] pt-[5px] pb-[10px]">
          <section className={`${panel} h-[26px]`}>
            <Heading className="pl-2">部件</Heading>
          </section>

          <section className={`${panel} px-2 pb-2`}>
            <Heading open>视图原点</Heading>
            <div className="mt-[5px] flex gap-[2px]">
              <button className="flex h-[32px] flex-1 items-center gap-[5px] bg-[#ffdf75]">
                <Svg w={15} h={16}>
                  <path d="M.5 0v16" stroke="#444" />
                  <path d="M1 1h14v11H1z" fill="#fff" />
                  <path d="M1 1h3v3H1zM7 1h3v3H7zM4 4h3v3H4zM10 4h4v3h-4zM1 7h3v3H1zM7 7h3v3H7zM4 10h3v3H4zM10 10h4v2h-4zM13 1h2v3h-2z" fill="#222" />
                </Svg>
                指定位置
              </button>
              <button aria-label="点对话框" className="flex h-[32px] w-[32px] items-center justify-center border border-[#ffc020] bg-[#ffdf75]">
                <Svg w={22} h={20}>
                  <path d="M.5 9.500h18v9H.5z" fill="#fff" stroke="#111" strokeWidth="1.200" />
                  <circle cx="9.500" cy="14" r="2" fill="#d01010" />
                  <path d="M15.500 1v12M10 7h11M13.500 3l2-2 2 2M13.500 11l2 2 2-2M11.500 5l-2 2 2 2M19.500 5l2 2-2 2" stroke="#e04000" strokeWidth="1.400" />
                </Svg>
              </button>
            </div>
            <div className={`${panel} mt-1 h-[93px] px-2`}>
              <Heading open className="gap-[2px]">放置</Heading>
              <div className="mt-[6px] flex items-center justify-between">
                <span>方法</span>
                <span className="relative flex items-center">
                  <Select label="方法" options={["自动判断"]} className="h-[26px] w-[138px]" inner="pl-6" />
                  <Svg w={15} h={17} className="pointer-events-none absolute left-[5px]">
                    <path d="M3 .8h8v5H3zM1 10.800h12v5H1z" fill="#fff" stroke="#111" strokeWidth="1.300" />
                    <path d="M7 3v10M5 8h4" stroke="#d01010" strokeWidth="1.400" />
                    <circle cx="7" cy="3.500" r="1.500" fill="#d01010" />
                    <circle cx="7" cy="13.500" r="1.500" fill="#d01010" />
                    <path d="M9 8l4-7 2 2z" fill="#e8d060" stroke="#5a4a14" />
                  </Svg>
                </span>
              </div>
              <Heading className="mt-[2px] pl-[9px]">跟踪</Heading>
            </div>
          </section>

          <section className={`${panel} px-2 pb-2`}>
            <Heading open>模型视图</Heading>
            <div className="mt-[6px] flex items-center justify-between">
              <span>要使用的模型视图</span>
              <Select label="要使用的模型视图" options={["俯视图"]} className="h-[25px] w-[138px]" inner="pl-1" />
            </div>
            <div className="mt-[2px] flex items-center justify-between">
              <span>定向视图工具</span>
              <button aria-label="定向视图工具" className="flex h-[32px] w-[32px] items-center justify-center border border-[#767676]">
                <Svg w={24}>
                  <path d="M9 16h9l4-3v7l-4 3H9z" fill="#ffe84a" stroke="#8a7a10" />
                  <path d="M8 8l6-2 4 4v4l-6 2-4-3z" fill="#ffe84a" stroke="#b8a520" />
                  <path d="M6 6c5-7 14-3 14 4M2 10c0 7 6 9 12 7" stroke="#1a237e" strokeWidth="2" />
                  <path d="M23 8l-2 5-4-4zM-.5 12l3-5 3 4z" fill="#1a237e" />
                </Svg>
              </button>
            </div>
          </section>

          <section className={`${panel} px-2 pb-2`}>
            <Heading open>比例</Heading>
            <div className="mt-[6px] flex items-center justify-between">
              <span>比例</span>
              <Select
                label="比例"
                options={["1:2"]}
                className="h-[25px] w-[138px] p-[2px] pr-[18px]"
                inner="border border-dotted border-black bg-[#d9eaf0] pl-px"
              />
            </div>
            <div className="mt-[2px] flex items-start">
              <label htmlFor="ratio" className="flex-1 leading-6">自动判断视图比例</label>
              <input
                id="ratio"
                value={ratio}
                onChange={(e) => setRatio(e.target.value)}
                className="mr-1 h-[23px] w-[82px] border border-[#767676] pr-[5px] text-right font-[Liberation_Serif,serif] text-[17px] outline-none"
              />
              <button aria-label="自动判断" className="flex h-[24px] w-[24px] items-center justify-center border border-[#767676]">
                <Bolt w={18} />
              </button>
            </div>
          </section>

          <section className={`${panel} px-2 pb-2`}>
            <Heading open>设置</Heading>
            <div className="mt-[6px] flex items-center justify-between">
              <span>设置</span>
              <button aria-label="设置" className="flex h-[32px] w-[32px] items-center justify-center border border-[#767676]">
                <BrushA w={24} />
              </button>
            </div>
            <div className={`${panel} mt-1 h-[25px] px-2`}>
              <Heading className="gap-[2px]">非剖切</Heading>
            </div>
          </section>

          <button aria-label="收起" className="flex h-[13px] items-center justify-center border-b border-[#d2d2d2]">
            <Svg w={9} h={5} className="mr-px"><path d="M0 5h9L4.500 0z" fill="#1a1a1a" /></Svg>
          </button>
          <button className="mt-[6px] mr-[10px] h-[25px] w-[54px] self-end bg-[#005f87] text-white">关闭</button>
        </div>
      </div>
    </div>
  );
}

/* ---------- drawing sheet ---------- */

const binderRows = [
  [705, 724, "借通用件登记", 714],
  [750, 769, "描    图", 759],
  [795, 814, "校    描", 804],
  [840, 859, "旧底图总号", 849],
  [885, 904, "签    字", 894],
  [930, 948, "日    期", 939],
];

const blockTexts = [
  [1297, 915, "标记"], [1317, 915, "处数"], [1353, 915, "更改文件号"], [1400, 915, "签 字"], [1432, 915, "日期"],
  [1307, 929, "设 计"], [1307, 942, "校 对"], [1307, 955, "审 核"], [1307, 968, "批 准"],
  [1643, 897, "图样标记"], [1703, 897, "重 量"], [1743, 897, "比 例"],
  [1643, 931, "共   页"], [1723, 931, "第   页"],
];

const holes = [[918.5, 624.5], [1129.5, 624.5], [918.5, 743.5], [1129.5, 743.5]];

function Sheet() {
  return (
    <svg
      viewBox="361 206 1558 802"
      preserveAspectRatio="xMinYMin meet"
      className="block h-full w-full"
      fill="none"
      fontFamily="Noto Sans CJK SC, sans-serif"
    >
      {/* paper edge */}
      <path d="M666.500 206v782.500H1775.500V206" stroke="#a8a8a8" />
      <path d="M666.500 206v782.500H1775.500V206" stroke="#5dff5d" strokeDasharray="9 7" />
      {/* binding column */}
      {binderRows.map(([a, b, text, y]) => (
        <g key={text}>
          <path d={`M666 ${a}.500h66`} stroke="#22f022" />
          <path d={`M666 ${b}.500h66`} stroke="#8dff8d" />
          <text x="700" y={y} fontSize="11" textAnchor="middle" dominantBaseline="central" fill="#fff3b0" style={{ whiteSpace: "pre" }}>{text}</text>
        </g>
      ))}
      <path d="M666 975.500h66" stroke="#aaffaa" />
      {/* frame */}
      <path d="M1286 975H732.500V217H1762.500V856" stroke="#33ff33" strokeWidth="2" />
      <path d="M732 243.500h148V217" stroke="#5dff5d" />
      {/* title block */}
      <g stroke="#c9c9c9" strokeWidth="1.500">
        <path d="M1287 856H1762V975H1287z" strokeWidth="2" />
        <path d="M1287 869.500h158M1287 882.500h158M1287 895.500h158M1287 908.500h158M1287 922h158M1287 935.500h158M1287 948.500h158M1287 961.500h158" />
        <path d="M1308 856v66M1326.500 856v119M1379.500 856v119M1419.500 856v66M1445.500 856v119M1604 856v119" />
        <path d="M1445 924.500h317M1604 890.500h158M1604 903.500h158M1604 937.500h158" />
        <path d="M1625.500 903v21M1646.500 903v21M1664.500 903v21M1683.500 890v47M1722.500 890v34" />
      </g>
      <g fill="#9a6238" fontSize="9" textAnchor="middle">
        {blockTexts.map(([x, y, t]) => (
          <text key={t} x={x} y={y} dominantBaseline="central" style={{ whiteSpace: "pre" }}>{t}</text>
        ))}
        <text x="1683" y="956" fontSize="11" dominantBaseline="central">西门子产品管理软件(上海)有限公司</text>
      </g>
      {/* surface finish mark */}
      <text x="1634" y="330" fontSize="10" dominantBaseline="central" fill="#fff6bf">其余</text>
      <path d="M1672 323.500H1657L1664 336.500L1680.500 307.500" stroke="#3c3cf0" />
      {/* base view */}
      <path d="M862.500 568.500h323v231h-323z" fill="#fff" stroke="#808080" />
      <path d="M881 584.500h286l2 2v195l-2 2H881l-2-2v-195z" fill="#8a8a8a" stroke="#666" />
      <path d="M879.500 586v196M881 782.500h286" stroke="#555" strokeWidth="2" />
      <path d="M881.500 587.500h285v193h-285z" fill="#adadad" stroke="#2a2a2a" />
      {holes.map(([x, y]) => (
        <g key={`${x}-${y}`} stroke="#333">
          <circle cx={x} cy={y} r="16" />
          <circle cx={x} cy={y} r="10.500" fill="#fff" />
        </g>
      ))}
      <circle cx="958" cy="684" r="10" fill="#fff" stroke="#333" />
      <circle cx="1090" cy="684" r="10" fill="#fff" stroke="#333" />
      <rect x="997.500" y="617.500" width="53" height="133" rx="26.500" stroke="#222" />
      <rect x="1010.500" y="631" width="27" height="106" rx="13.500" fill="#fff" stroke="#333" />
      {/* sheet name */}
      <text x="370" y="1003" fontSize="13" fill="#f4a460" fontFamily="Liberation Sans, sans-serif">"A3_1"</text>
    </svg>
  );
}

function ViewToolbar() {
  return (
    <div className="absolute top-[32px] left-[742px] flex h-[34px] w-[75px] items-center border-b border-[#dcdcdc] bg-white">
      <button aria-label="视图定向" className="ml-[13px] flex items-center gap-[7px]">
        <Svg w={23}>
          <circle cx="11.500" cy="11.500" r="9" stroke="#333" strokeWidth="1.400" strokeDasharray="5 1" />
          <path d="M11.500 0v7M11.500 16v7M0 11.500h7M16 11.500h7M9.500 5l2 2 2-2M9.500 18l2-2 2 2M5 9.500l2 2-2 2M18 9.500l-2 2 2 2" stroke="#333" strokeWidth="1.200" />
          <path d="M11.500 8l3 3.500-3 3.500-3-3.500z" fill={ORANGE} />
        </Svg>
        <Caret />
      </button>
      <span className="ml-[10px] h-[26px] w-px bg-[#dcdcdc]" />
      <Caret className="ml-1 mb-2 self-end" />
    </div>
  );
}

/* ---------- status bar ---------- */

function ImeBar() {
  const b = "#0a6cd6";
  return (
    <div className="absolute bottom-0 left-[1155px] z-20 flex h-[24px] w-[226px] items-center gap-2 rounded-tr-[2px] border border-b-0 border-[#b0cbea] bg-white">
      <Svg w={30} h={28} className="-mt-1 -mr-[2px]">
        <path d="M2 3l20-3 6 22-21 5-7-6z" fill="#f4511e" />
        <path d="M21 6c-6-3-14-1-13 3 1 5 12 2 12 8 0 4-9 5-14 1" stroke="#fff" strokeWidth="3.500" />
      </Svg>
      <span className="w-4 text-[14px] font-bold text-[#0a6cd6]">英</span>
      <Svg w={16}>
        <circle cx="4" cy="5" r="2" fill={b} />
        <path d="M10 9h3c0 3-1 4-3 5z" fill={b} />
      </Svg>
      <Svg w={16}>
        <rect x="5" y="0" width="6" height="10" rx="3" fill={b} />
        <path d="M2.500 7c0 7 11 7 11 0M8 12v4" stroke={b} strokeWidth="1.500" />
      </Svg>
      <Svg w={16}>
        <rect x="0" y="2" width="16" height="12" rx="2" fill={b} />
        <path d="M3 5.500h10M3 8.500h10" stroke="#fff" strokeWidth="1.500" strokeDasharray="2 2" />
        <path d="M4 11.500h8" stroke="#fff" strokeWidth="1.500" />
      </Svg>
      <Svg w={16} h={18}>
        <path d="M0 5l4-3 4 2 4-2 4 3-2 5-2-1v7c-2 2-6 2-8 0V9l-2 1z" fill="#a06bf0" />
        <path d="M0 5l4-3 1 6-3 2z" fill="#ff5c8a" />
        <circle cx="15" cy="1" r="3" fill="#f4511e" />
      </Svg>
      <Svg w={16}>
        <path d="M3 1h10c4 1 4 9 1 9H2C-1 10-1 2 3 1z" fill={b} />
        <path d="M3 5.500h4M5 3.500v4" stroke="#fff" />
        <path d="M2 15c0-3 2-5 6-5s6 2 6 5" stroke={b} strokeWidth="2" />
        <circle cx="11.500" cy="5.500" r="1.500" fill="#fff" />
      </Svg>
      <Svg w={16}>
        <rect x="1" y="1" width="6" height="6" rx="1" fill={b} />
        <rect x="1" y="9" width="6" height="6" rx="1" fill={b} />
        <rect x="9" y="9" width="6" height="6" rx="1" fill={b} />
        <circle cx="12" cy="4" r="3.300" fill={b} />
      </Svg>
      <Svg w={16}>
        <path d="M8 0l2 3 4-1v4l2 2-2 3v3l-4-1-2 2-2-2-4 1v-3L0 8l2-2V2l4 1z" fill={b} />
        <path d="M8 7v8M6 7a2 2 0 114 0" stroke="#fff" strokeWidth="1.500" />
      </Svg>
    </div>
  );
}

function StatusBar() {
  return (
    <footer className="flex h-[20px] shrink-0 items-center border-t border-[#a8a8a8] bg-white pt-px pr-[54px] pl-[3px] text-[11px]">
      <span className="font-medium">指定放置视图的位置</span>
      <button className="ml-auto flex items-center gap-[6px]">
        <Svg w={13} h={16}>
          <path d="M6.500 2c-3 0-4 2-4 5s-1 4-2 6h12c-1-2-2-3-2-6s-1-5-4-5zM5 13.500c0 2 3 2 3 0M6.500 0v2" stroke="#333" />
        </Svg>
        3 通知
      </button>
    </footer>
  );
}

export default function App() {
  return (
    <div className="relative flex h-screen flex-col overflow-hidden bg-white font-['Open_Sans','Noto_Sans_CJK_SC',sans-serif] text-[#1a1a1a]">
      <header className="shrink-0 bg-linear-to-r from-[#00648a] to-[#057aa7]">
        <TitleBar />
        <TabBar />
      </header>
      <Ribbon />
      <SelectionBar />
      <main className="flex min-h-0 flex-1">
        <ResourceBar />
        <PartNavigator />
        <div className="relative flex min-w-0 flex-1 flex-col border-l border-[#dcdcdc] pb-px">
          <div className="h-[27px] shrink-0 border-b-2 border-[#005f87]" />
          <div className="min-h-0 flex-1 border border-[#777777]">
            <Sheet />
          </div>
          <ViewToolbar />
          <BaseViewDialog />
        </div>
      </main>
      <StatusBar />
      <ImeBar />
      <div className="pointer-events-none absolute right-1 bottom-[6px] z-20 text-[36px] leading-[52px] font-[Liberation_Sans,Noto_Sans_CJK_SC,sans-serif] text-[#d2d2d2]/80 [text-shadow:1px_1px_1px_#8a8a8a]">
        CSDN @山涧果子
      </div>
    </div>
  );
}
